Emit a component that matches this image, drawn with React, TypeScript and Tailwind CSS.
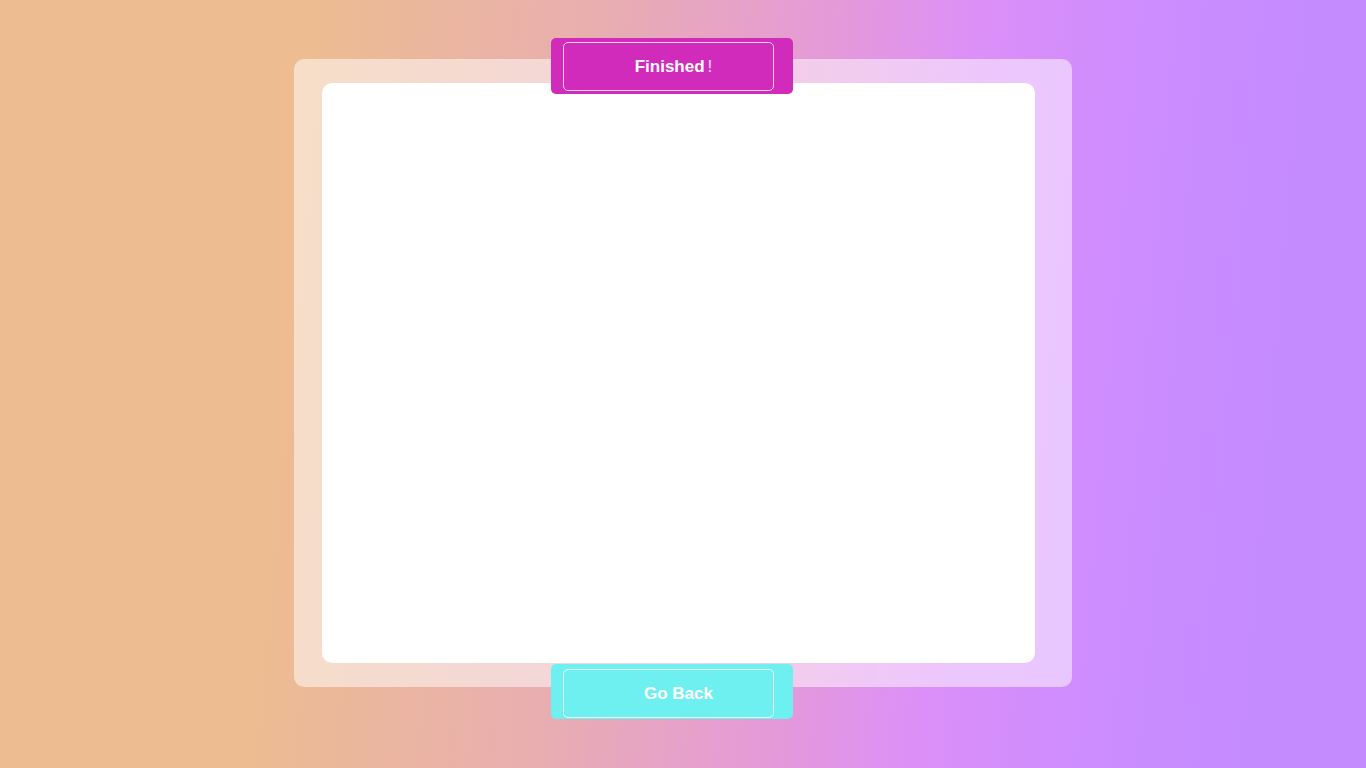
const App = () => {
  return (
    <div className="min-h-screen w-full bg-[linear-gradient(95deg,#edbc91_22%,#e8aeb0_42%,#e59ad8_58%,#db8ff9_69%,#ca8cff_83%,#c48bff_92%)] pt-[59px] font-['Liberation_Sans',Arial,sans-serif]">
      <div className="relative mx-auto h-[628px] w-[778px] rounded-[10px] bg-white/50 pl-[28px] pt-[24px]">
        <div className="h-[580px] w-[713px] rounded-[10px] bg-white" />

        {/* title tab */}
        <div className="absolute left-[257px] top-[-21px] h-[56px] w-[242px] rounded-[5px] bg-[#d12bbb] pl-[12px] pt-[4px]">
          <div className="flex h-[49px] w-[211px] items-center justify-center rounded-[5px] border border-white/80 pl-[10px]">
            <span className="text-[17px] font-bold text-white">
              Finished<span className="ml-[3px] font-normal text-white/90">!</span>
            </span>
          </div>
        </div>

        {/* back button */}
        <button className="absolute left-[257px] top-[605px] h-[55px] w-[242px] rounded-[5px] bg-[#6ff0f0] pl-[12px] pt-[4px] text-left">
          <div className="flex h-[49px] w-[211px] items-center justify-center rounded-[5px] border border-white/80 pl-[20px]">
            <span className="text-[17px] font-bold text-white">Go Back</span>
          </div>
        </button>
      </div>
    </div>
  );
};

export default App;
